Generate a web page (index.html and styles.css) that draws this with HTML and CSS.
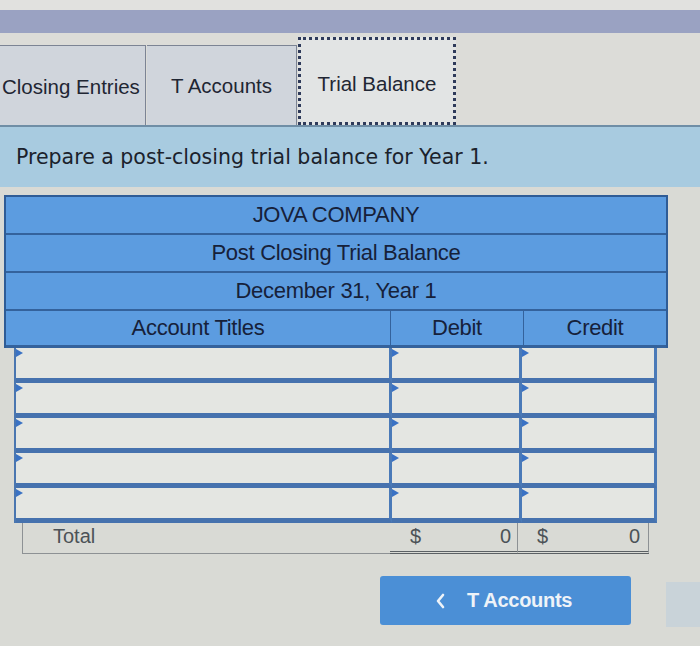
FILE: index.html
```html
<!DOCTYPE html>
<html lang="en">
<head>
<meta charset="utf-8">
<title>Trial Balance</title>
<link rel="stylesheet" href="styles.css">
</head>
<body>
<div class="strip"></div>
<div class="band"></div>
<nav class="tabs">
  <div class="tab tab-first">Closing Entries</div>
  <div class="tab">T Accounts</div>
  <div class="tab tab-active">Trial Balance</div>
</nav>
<div class="prompt">Prepare a post-closing trial balance for Year 1.</div>
<div class="sheet">
  <div class="head">
    <div class="hrow">JOVA COMPANY</div>
    <div class="hrow">Post Closing Trial Balance</div>
    <div class="hrow">December 31, Year 1</div>
    <div class="hcols">
      <div class="hc">Account Titles</div>
      <div class="hc">Debit</div>
      <div class="hc">Credit</div>
    </div>
  </div>
  <div class="grid">
    <div class="cell"></div><div class="cell"></div><div class="cell"></div>
    <div class="cell"></div><div class="cell"></div><div class="cell"></div>
    <div class="cell"></div><div class="cell"></div><div class="cell"></div>
    <div class="cell"></div><div class="cell"></div><div class="cell"></div>
    <div class="cell"></div><div class="cell"></div><div class="cell"></div>
  </div>
  <div class="total">
    <div class="tlabel">Total</div>
    <div class="tamt"><span>$</span><span>0</span></div>
    <div class="tamt"><span>$</span><span>0</span></div>
  </div>
</div>
<div class="actions">
  <button class="back"><svg class="chev" width="10" height="16" viewBox="0 0 10 16"><path d="M8 2 L3 8 L8 14" fill="none" stroke="currentColor" stroke-width="2.6" stroke-linecap="round" stroke-linejoin="round"/></svg>T Accounts</button>
  <div class="ghost"></div>
</div>
</body>
</html>
```
FILE: styles.css
```css
* { box-sizing: border-box; }
html, body { margin: 0; padding: 0; }
body {
  width: 700px;
  height: 646px;
  overflow: hidden;
  background: #d9dad5;
  font-family: "Liberation Sans", Arial, sans-serif;
}
.strip { height: 10px; background: #e1e1df; }
.band { height: 23px; background: #9aa2c2; }
.tabs {
  height: 92px;
  padding-top: 4px;
  display: flex;
  align-items: flex-end;
  background: #dcdcd8;
}
.tab {
  height: 80px;
  width: 150px;
  display: flex;
  align-items: center;
  justify-content: center;
  font-size: 20.5px;
  color: #1f2633;
  background: #d0d5dc;
  border: 1px solid #7c8494;
  border-bottom: none;
  border-left: none;
  margin-right: 1px;
}
.tab-first { width: 146px; justify-content: flex-start; padding-left: 2px; padding-top: 3px; }
.tab-active {
  height: 88px;
  width: 158px;
  background: #e2e4e4;
  border: 3px dotted #2e3a5a;
  padding-top: 6px;
}
.prompt {
  height: 62px;
  background: #a8cbe0;
  border-top: 2px solid #6f8ea6;
  padding-left: 16px;
  display: flex;
  align-items: center;
  font-family: "DejaVu Sans", Verdana, sans-serif;
  font-size: 20.5px;
  color: #1b222c;
}
.sheet { padding-top: 8px; }
.head {
  margin-left: 4px;
  width: 664px;
  background: #5c9ce0;
  border: 2px solid #2f5c96;
  border-bottom: none;
}
.hrow {
  height: 38px;
  display: flex;
  align-items: center;
  justify-content: center;
  font-size: 22px;
  color: #16213a;
  border-bottom: 2px solid #34629c;
  letter-spacing: -0.3px;
}
.hcols {
  display: grid;
  grid-template-columns: 385px 133px 1fr;
  height: 37px;
  border-bottom: 3px solid #34629c;
}
.hc {
  display: flex;
  align-items: center;
  justify-content: center;
  font-size: 22px;
  color: #16213a;
  letter-spacing: -0.3px;
  border-right: 1px solid #34629c;
}
.hc:last-child { border-right: none; }
.grid {
  margin-left: 14px;
  width: 643px;
  display: grid;
  grid-template-columns: 376px 130px 1fr;
  grid-auto-rows: 35px;
  border-left: 2px solid #4a76b0;
}
.cell {
  position: relative;
  background: #e4e6e2;
  border-bottom: 5px solid #4672ae;
  border-right: 3px solid #4a7ab8;
}
.cell::before {
  content: "";
  position: absolute;
  left: 0;
  top: 1px;
  border-left: 7px solid #3a72c4;
  border-top: 4px solid transparent;
  border-bottom: 4px solid transparent;
}
.total {
  margin-left: 22px;
  width: 627px;
  display: grid;
  grid-template-columns: 368px 128px 1fr;
  height: 31px;
  font-size: 20px;
  color: #4c5257;
}
.tlabel {
  padding-left: 30px;
  display: flex;
  align-items: center;
  border-left: 1px solid #8d9194;
  border-bottom: 1px solid #8d9194;
  padding-bottom: 4px;
}
.tamt {
  display: flex;
  align-items: center;
  justify-content: space-between;
  padding: 0 6px 2px 20px;
  border-right: 1px solid #8d9194;
  border-bottom: 3px double #5b6064;
}
.tamt:last-child { padding-left: 19px; padding-right: 8px; }
.actions {
  margin-top: 22px;
  height: 50px;
  display: flex;
  justify-content: flex-end;
}
.back {
  width: 251px;
  height: 49px;
  margin-right: 35px;
  background: #4b8fd6;
  border: none;
  border-radius: 3px;
  color: #eef3f8;
  font-family: "Liberation Sans", Arial, sans-serif;
  font-weight: bold;
  font-size: 20px;
  letter-spacing: -0.3px;
  display: flex;
  align-items: center;
  justify-content: center;
  padding-right: 10px;
}
.chev {
  margin-right: 22px;
}
.ghost {
  width: 34px;
  height: 45px;
  margin-top: 6px;
  background: #c9d3d9;
}
```
